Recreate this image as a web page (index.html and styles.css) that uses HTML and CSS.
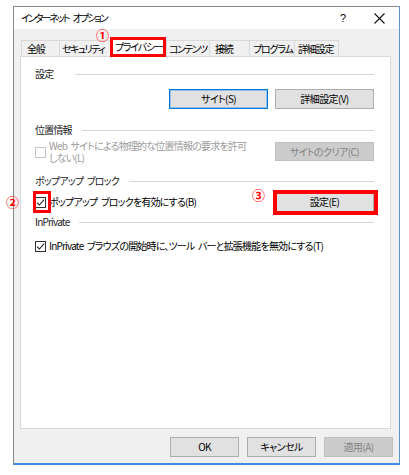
FILE: index.html
```html
<!DOCTYPE html>
<html lang="ja">
<head>
<meta charset="utf-8">
<link rel="stylesheet" href="styles.css">
</head>
<body>
<div class="window">
  <div class="titlebar">
    <span class="title">インターネット オプション</span>
    <span class="help">?</span>
    <span class="close"><svg width="11" height="11" viewBox="0 0 11 11"><path d="M0.5 0.5 L10.5 10.5 M10.5 0.5 L0.5 10.5" stroke="#111" stroke-width="1.1" fill="none"/></svg></span>
  </div>
  <div class="tabs">
    <div class="tab t1">全般</div>
    <div class="tab t2">セキュリティ</div>
    <div class="tab t3 selected">プライバシー<span class="mark mark1">①</span></div>
    <div class="tab t4">コンテンツ</div>
    <div class="tab t5">接続</div>
    <div class="tab t6">プログラム</div>
    <div class="tab t7">詳細設定</div>
  </div>
  <div class="panel">
    <div class="group g1"><span class="gtitle">設定</span><span class="gline"></span></div>
    <div class="btnrow">
      <button class="btn default">サイト(S)</button>
      <button class="btn">詳細設定(V)</button>
    </div>

    <div class="group g2"><span class="gtitle">位置情報</span><span class="gline"></span></div>
    <div class="row loc">
      <span class="cb disabled"></span>
      <span class="label disabled two">Web サイトによる物理的な位置情報の要求を許可<br>しない(L)</span>
      <button class="btn wide off">サイトのクリア(C)</button>
    </div>

    <div class="group g3"><span class="gtitle">ポップアップ ブロック</span><span class="gline"></span></div>
    <div class="row popup">
      <span class="cbwrap"><span class="cb checked"><svg width="9" height="9" viewBox="0 0 9 9"><path d="M1 4.6 L3.4 7 L8.2 1.6" stroke="#222" stroke-width="1.1" fill="none"/></svg></span><span class="mark mark2">②</span></span>
      <span class="label">ポップアップ ブロックを有効にする(B)</span>
      <span class="btnwrap"><button class="btn wide">設定(E)</button><span class="mark mark3">③</span></span>
    </div>

    <div class="group g4"><span class="gtitle">InPrivate</span><span class="gline"></span></div>
    <div class="row inpriv">
      <span class="cb checked"><svg width="9" height="9" viewBox="0 0 9 9"><path d="M1 4.6 L3.4 7 L8.2 1.6" stroke="#222" stroke-width="1.1" fill="none"/></svg></span>
      <span class="label">InPrivate ブラウズの開始時に、ツール バーと拡張機能を無効にする(T)</span>
    </div>
  </div>
  <div class="footer">
    <button class="btn fbtn">OK</button>
    <button class="btn fbtn">キャンセル</button>
    <button class="btn fbtn off">適用(A)</button>
  </div>
</div>
</body>
</html>
```

FILE: styles.css
```css
* { box-sizing: border-box; }
html, body { margin: 0; padding: 0; background: #ffffff; }
body {
  font-family: "Noto Sans CJK JP", "Noto Sans", sans-serif;
  font-size: 10px;
  letter-spacing: -0.8px;
  word-spacing: 2px;
  font-feature-settings: "palt";
  color: #000;
}
.window {
  margin: 6px 0 0 13px;
  width: 387px;
  height: 459px;
  background: #f0f0f0;
  border-left: 1px solid #8a8a8a;
  border-top: 1px solid #8a8a8a;
  border-right: 1px solid #5a93cf;
  border-bottom: 2px solid #3d8ee0;
  display: flex;
  flex-direction: column;
}
.titlebar {
  height: 22px;
  background: #fff;
  display: flex;
  align-items: center;
  padding-left: 7px;
}
.title { flex: 1; line-height: 12px; letter-spacing: -2px; word-spacing: 4px; }
.help { width: 12px; text-align: center; margin-right: 25px; font-family: "Liberation Sans", sans-serif; font-size: 11px; letter-spacing: 0; }
.close { width: 11px; height: 11px; margin-right: 14px; display: flex; }
.tabs {
  margin: 11px 0 0 7px;
  height: 16px;
  display: flex;
  align-items: flex-end;
  position: relative;
  z-index: 1;
}
.tab {
  height: 16px;
  padding-left: 5px;
  line-height: 15px;
  border: 1px solid #d9d9d9;
  border-bottom: none;
  border-right: none;
  background: #f0f0f0;
  white-space: nowrap;
  letter-spacing: -1.2px;
  flex: none;
}
.t7 { border-right: 1px solid #d9d9d9; }
.t1 { width: 38px; }
.t2 { width: 51px; padding-left: 2px; letter-spacing: -1.6px; }
.t3 { width: 56px; }
.t4 { width: 43px; padding-left: 2px; letter-spacing: -1.6px; }
.t5 { width: 40px; }
.t6 { width: 45px; padding-left: 3px; }
.t7 { width: 45px; padding-left: 3px; }
.tab.selected {
  height: 20px;
  margin-bottom: -1px;
  background: #fff;
  border: 3px solid #ff0000;
  padding-left: 2px;
  line-height: 14px;
  position: relative;
}
.mark {
  position: absolute;
  color: #ff0000;
  font-size: 13px;
  font-weight: bold;
  line-height: 1;
  letter-spacing: 0;
  font-feature-settings: normal;
}
.mark1 { left: -17px; top: -12px; }
.panel {
  margin: 0 8px 0 6px;
  height: 373px;
  background: #fff;
  border: 1px solid #d9d9d9;
  padding: 0 16px 0 14px;
}
.group {
  display: flex;
  align-items: center;
  height: 14px;
  color: #222;
}
.gtitle { white-space: nowrap; line-height: 14px; }
.gline { flex: 1; height: 1px; background: #d6d6d6; margin-left: 10px; margin-top: 1px; }
.g1 { margin-top: 10px; }
.g1 .gline { margin-left: 22px; }
.g2 { margin-top: 14px; }
.g3 { margin-top: 12px; }
.g4 { margin-top: 2px; }
.btnrow {
  margin-top: 8px;
  display: flex;
  justify-content: flex-end;
  gap: 7px;
}
.btn {
  font: inherit;
  letter-spacing: -0.6px;
  height: 20px;
  width: 99px;
  padding: 0;
  background: #e1e1e1;
  border: 1px solid #adadad;
  color: #000;
  line-height: 18px;
  text-align: center;
}
.btn.default { border-color: #0078d7; box-shadow: inset 0 0 0 1px #8fbfeb; }
.btn.off { background: #cccccc; border-color: #bfbfbf; color: #838383; }
.row {
  display: flex;
  align-items: center;
}
.cb {
  width: 11px;
  height: 11px;
  border: 1px solid #333;
  background: #fff;
  flex: none;
  display: flex;
  align-items: center;
  justify-content: center;
}
.cb.disabled { border-color: #c4c4c4; }
.label { margin-left: 3px; white-space: nowrap; line-height: 12px; }
.label.disabled { color: #9b9b9b; }
.loc { margin-top: 3px; height: 22px; align-items: flex-start; }
.loc .cb { margin-top: 7px; }
.loc .two { line-height: 12px; margin-top: 0; }
.loc .btn { margin-left: auto; margin-top: 2px; height: 19px; }
.popup { margin-top: 3px; height: 22px; }
.cbwrap { position: relative; display: flex; }
.cbwrap::after {
  content: "";
  position: absolute;
  left: -2px; right: -5px; top: -6px; bottom: -5px;
  border: 3px solid #ff0000;
}
.mark2 { left: -29px; top: -2px; }
.btnwrap { margin-left: auto; position: relative; display: flex; }
.btnwrap::after {
  content: "";
  position: absolute;
  left: -2px; right: -4px; top: -2px; bottom: -3px;
  border: 4px solid #ff0000;
}
.mark3 { left: -23px; top: -4px; }
.inpriv { margin-top: 11px; }
.footer {
  margin-top: 8px;
  display: flex;
  justify-content: flex-end;
  gap: 8px;
  padding-right: 6px;
}
.fbtn { width: 69px; }
```
